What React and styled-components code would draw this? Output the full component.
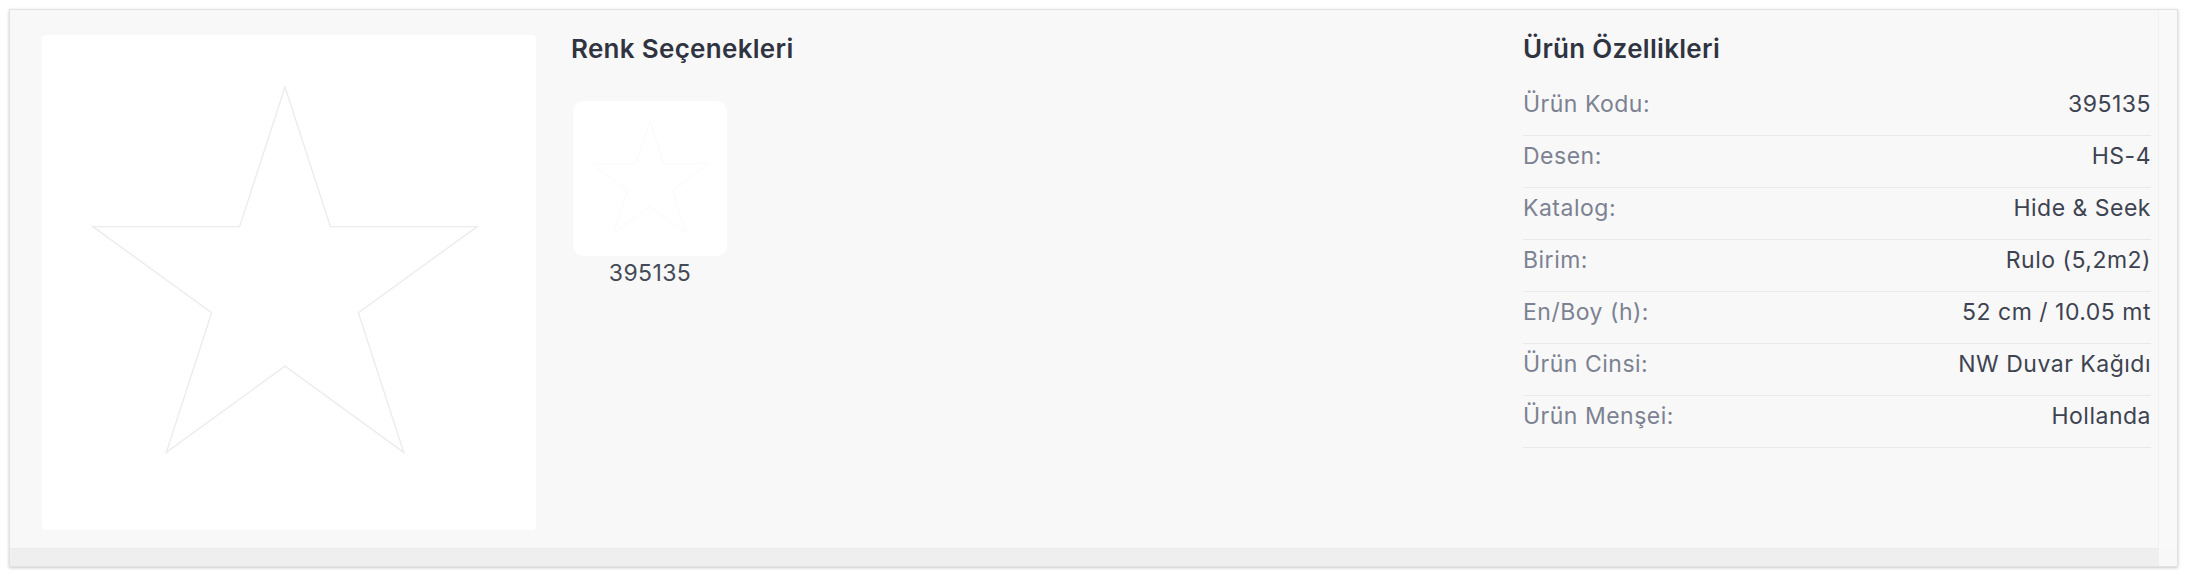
import React from "react";
import styled, { createGlobalStyle } from "styled-components";

const GlobalStyle = createGlobalStyle`
	html, body {
		margin: 0;
		padding: 0;
		background: #ffffff;
	}
	body {
		font-family: Inter, "Noto Sans", "Liberation Sans", sans-serif;
	}
`;

const Page = styled.div`
	padding: 9px 10px 9px 9px;
`;

const Card = styled.div`
	height: 558px;
	background-color: #f8f8f9;
	border: 1px solid #e2e2e2;
	box-shadow: 0 1px 3px rgba(0, 0, 0, 0.22);
	display: flex;
	flex-direction: column;
	box-sizing: border-box;
`;

const Viewport = styled.div`
	flex: 1;
	display: flex;
	min-height: 0;
`;

const Content = styled.div`
	flex: 1;
	display: flex;
	gap: 35px;
	padding: 25px 7px 0 32px;
`;

const TrackV = styled.div`
	width: 18px;
	background-color: #f9f9f9;
	border-left: 1px solid #f1f1f1;
`;

const TrackH = styled.div`
	height: 17px;
	background-color: #efefef;
	border-top: 1px solid #ebebeb;
	margin-right: 18px;
`;

const Photo = styled.div`
	width: 494px;
	height: 495px;
	flex: none;
	background-color: #ffffff;
	border-radius: 4px;
	display: flex;
	align-items: center;
	justify-content: center;
`;

const Options = styled.div`
	flex: 1;
	display: flex;
	flex-direction: column;
	align-items: flex-start;
`;

const Heading = styled.h2`
	margin: 0;
	font-size: 26px;
	line-height: 28px;
	font-weight: 600;
	color: #2f3440;
	letter-spacing: 0.3px;
`;

const Swatch = styled.div`
	margin-top: 38px;
	margin-left: 2px;
	display: flex;
	flex-direction: column;
	align-items: center;
`;

const SwatchTile = styled.div`
	width: 154px;
	height: 155px;
	border-radius: 10px;
	background-color: #ffffff;
	display: flex;
	align-items: center;
	justify-content: center;
`;

const SwatchLabel = styled.span`
	margin-top: 4px;
	font-size: 23px;
	line-height: 26px;
	color: #454b56;
	letter-spacing: 0.4px;
`;

const Specs = styled.div`
	width: 628px;
	flex: none;
`;

const SpecList = styled.div`
	margin-top: 21px;
`;

const SpecRow = styled.div`
	display: flex;
	justify-content: space-between;
	padding: 6px 0 17px;
	line-height: 28px;
	font-size: 23px;
	letter-spacing: 0.5px;
	border-bottom: 1px solid #e9e9ec;
`;

const SpecKey = styled.span`
	color: #7c8291;
`;

const SpecValue = styled.span`
	color: #3d4350;
`;

const starPoints = (cx, cy, R) => {
	const r = R * 0.382;
	const pts = [];
	for (let i = 0; i < 10; i++) {
		const a = (-90 + i * 36) * (Math.PI / 180);
		const rad = i % 2 === 0 ? R : r;
		pts.push(`${(cx + rad * Math.cos(a)).toFixed(1)},${(cy + rad * Math.sin(a)).toFixed(1)}`);
	}
	return pts.join(" ");
};

const Star = ({ w, h, cx, cy, R, color, stroke }) => (
	<svg width={w} height={h} viewBox={`0 0 ${w} ${h}`}>
		<polygon points={starPoints(cx, cy, R)} fill="none" stroke={color} strokeWidth={stroke} strokeLinejoin="miter" />
	</svg>
);

const specs = [
	["Ürün Kodu:", "395135"],
	["Desen:", "HS-4"],
	["Katalog:", "Hide & Seek"],
	["Birim:", "Rulo (5,2m2)"],
	["En/Boy (h):", "52 cm / 10.05 mt"],
	["Ürün Cinsi:", "NW Duvar Kağıdı"],
	["Ürün Menşei:", "Hollanda"]
];

const App = () => (
	<>
		<GlobalStyle />
		<Page>
			<Card>
				<Viewport>
					<Content>
						<Photo>
							<Star w={494} h={495} cx={243} cy={254} R={202} color="#ececec" stroke={1.4} />
						</Photo>
						<Options>
							<Heading>Renk Seçenekleri</Heading>
							<Swatch>
								<SwatchTile>
									<Star w={154} h={155} cx={77} cy={82} R={62} color="#fafafa" stroke={1} />
								</SwatchTile>
								<SwatchLabel>395135</SwatchLabel>
							</Swatch>
						</Options>
						<Specs>
							<Heading>Ürün Özellikleri</Heading>
							<SpecList>
								{specs.map(([k, v]) => (
									<SpecRow key={k}>
										<SpecKey>{k}</SpecKey>
										<SpecValue>{v}</SpecValue>
									</SpecRow>
								))}
							</SpecList>
						</Specs>
					</Content>
					<TrackV />
				</Viewport>
				<TrackH />
			</Card>
		</Page>
	</>
);

export default App;
